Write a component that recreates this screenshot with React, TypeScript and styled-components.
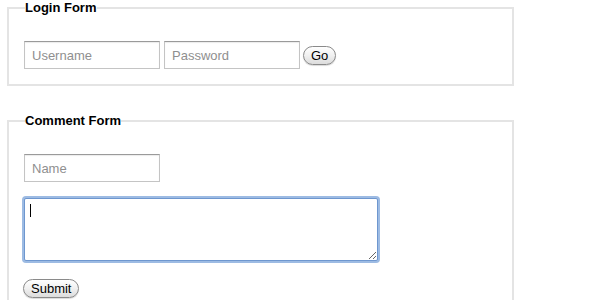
import React from 'react';
import styled, { createGlobalStyle } from 'styled-components';

const GlobalStyle = createGlobalStyle`
  body {
    margin: 0;
    background: #fff;
    font-family: "Liberation Sans", Arial, sans-serif;
  }
`;

const Page = styled.div`
  padding: 0 7px;
  display: flex;
  flex-direction: column;
  gap: 27px;
`;

const Fieldset = styled.fieldset`
  box-sizing: border-box;
  width: 507px;
  margin: 0;
  border: 2px solid #e4e4e4;
  padding: 26px 15px 15px;
`;

const Legend = styled.legend`
  padding: 0;
  margin-left: 1px;
  font-size: 13px;
  font-weight: bold;
  color: #000;
  line-height: 15px;
`;

const Row = styled.div<{ $mt?: number }>`
  display: flex;
  align-items: center;
  gap: 4px;
  margin-top: ${p => p.$mt ?? 0}px;
`;

const TextInput = styled.input`
  box-sizing: border-box;
  width: 136px;
  height: 28px;
  margin: 0;
  padding: 0 7px;
  border: 1px solid #c4c4c4;
  border-top-color: #9a9a9a;
  box-shadow: inset 0 1px 1px rgba(0, 0, 0, 0.08);
  font-family: "Liberation Sans", Arial, sans-serif;
  font-size: 13px;
  color: #333;
  outline: none;
  &::placeholder {
    color: #8f8f8f;
  }
`;

const Button = styled.button`
  box-sizing: border-box;
  height: 19px;
  margin: 0 0 0 -1px;
  padding: 0 7px;
  border: 1px solid #8a8a8a;
  border-radius: 10px;
  background: linear-gradient(#ffffff, #f0f0f0 50%, #dcdcdc);
  box-shadow: 0 1px 1px rgba(0, 0, 0, 0.15);
  font-family: "Liberation Sans", Arial, sans-serif;
  font-size: 13px;
  line-height: 15px;
  color: #000;
`;

const AreaWrap = styled.div`
  position: relative;
  width: 354px;
`;

const TextArea = styled.textarea`
  display: block;
  box-sizing: border-box;
  width: 354px;
  height: 63px;
  margin: 0;
  padding: 5px 6px;
  border: 1px solid #6e97cf;
  border-radius: 2px;
  box-shadow: 0 0 0 2px #9dbbe3;
  font-family: "Liberation Sans", Arial, sans-serif;
  font-size: 13px;
  outline: none;
  resize: both;
`;

const Caret = styled.span`
  position: absolute;
  left: 6px;
  top: 6px;
  width: 1px;
  height: 13px;
  background: #000;
`;

const App = () => {
  return (
    <>
      <GlobalStyle />
      <Page>
        <Fieldset>
          <Legend>Login Form</Legend>
          <Row>
            <TextInput placeholder="Username" />
            <TextInput type="password" placeholder="Password" />
            <Button>Go</Button>
          </Row>
        </Fieldset>
        <Fieldset>
          <Legend>Comment Form</Legend>
          <Row>
            <TextInput placeholder="Name" />
          </Row>
          <Row $mt={16}>
            <AreaWrap>
              <TextArea />
              <Caret />
            </AreaWrap>
          </Row>
          <Row $mt={18}>
            <Button>Submit</Button>
          </Row>
        </Fieldset>
      </Page>
    </>
  );
};

export default App;
